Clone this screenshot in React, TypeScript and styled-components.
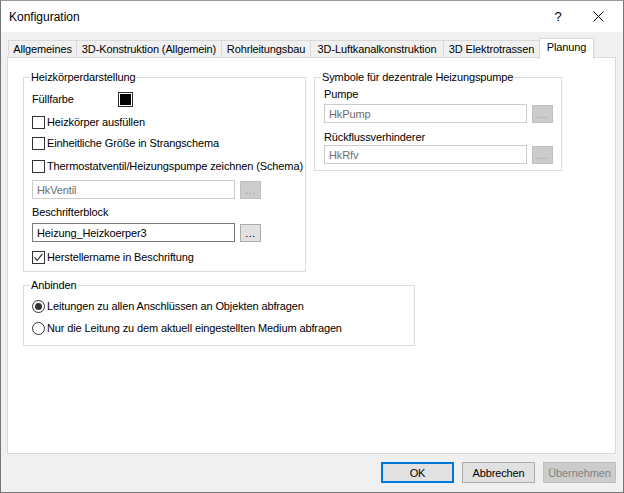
import React from "react";
import styled, { createGlobalStyle } from "styled-components";

const GlobalStyle = createGlobalStyle`
  html, body {
    margin: 0;
    padding: 0;
    background: #ffffff;
  }
  body {
    font-family: "Liberation Sans", Arial, sans-serif;
    font-size: 11px;
    letter-spacing: -0.12px;
    color: #000000;
  }
  * {
    box-sizing: border-box;
  }
`;

const Window = styled.div`
  width: 624px;
  height: 493px;
  display: flex;
  flex-direction: column;
  border: 1px solid #767676;
  border-top-color: #9a9a9a;
  background: #f0f0f0;
  overflow: hidden;
`;

const TitleBar = styled.div`
  height: 31px;
  flex: none;
  display: flex;
  align-items: center;
  background: #ffffff;
  padding: 0 2px 0 8px;
`;

const Title = styled.div`
  flex: 1;
  font-size: 12px;
  letter-spacing: 0;
  padding-top: 1px;
`;

const TitleButton = styled.div<{ $w: number }>`
  width: ${(p) => p.$w}px;
  height: 30px;
  display: flex;
  align-items: center;
  justify-content: center;
  font-size: 13px;
`;

const Body = styled.div`
  flex: 1;
  display: flex;
  flex-direction: column;
  padding: 6px 7px 8px 6px;
`;

const TabStrip = styled.div`
  display: flex;
  align-items: flex-end;
  height: 20px;
  padding-left: 1px;
  position: relative;
  z-index: 1;
`;

const Tab = styled.div<{ $w: number; $active?: boolean }>`
  width: ${(p) => p.$w}px;
  height: ${(p) => (p.$active ? 21 : 18)}px;
  margin-left: -1px;
  margin-bottom: ${(p) => (p.$active ? -1 : 0)}px;
  border: 1px solid #d9d9d9;
  border-bottom: ${(p) => (p.$active ? "none" : "1px solid #d9d9d9")};
  background: ${(p) => (p.$active ? "#ffffff" : "#f0f0f0")};
  display: flex;
  justify-content: center;
  align-items: ${(p) => (p.$active ? "flex-start" : "center")};
  padding-top: ${(p) => (p.$active ? 2 : 0)}px;
  white-space: nowrap;
  &:first-child {
    margin-left: 0;
  }
`;

const Panel = styled.div`
  height: 397px;
  margin-top: -1px;
  background: #ffffff;
  border: 1px solid #d9d9d9;
  padding: 12px 15px 0 15px;
  display: flex;
  flex-direction: column;
`;

const GroupRow = styled.div<{ $mt?: number }>`
  display: flex;
  align-items: flex-start;
  gap: 8px;
  margin-top: ${(p) => p.$mt ?? 0}px;
`;

const Group = styled.fieldset<{ $w: number }>`
  width: ${(p) => p.$w}px;
  margin: 0;
  min-width: 0;
  border: 1px solid #dcdcdc;
  padding: 0;
`;

const Legend = styled.legend`
  margin-left: 6px;
  padding: 0 1px;
  line-height: 14px;
  font-size: 11px;
`;

const GroupBody = styled.div<{ $pl: number; $pb: number }>`
  display: flex;
  flex-direction: column;
  padding: 0 0 ${(p) => p.$pb}px ${(p) => p.$pl}px;
`;

const Row = styled.div<{ $mt: number; $h?: number }>`
  display: flex;
  align-items: center;
  margin-top: ${(p) => p.$mt}px;
  height: ${(p) => p.$h ?? 20}px;
  white-space: nowrap;
`;

const Label = styled.div<{ $w?: number }>`
  width: ${(p) => (p.$w ? `${p.$w}px` : "auto")};
`;

const ColorSwatch = styled.div`
  width: 15px;
  height: 15px;
  border: 1px solid #2b2b2b;
  padding: 1px;
  background: #ffffff;
  &::after {
    content: "";
    display: block;
    width: 100%;
    height: 100%;
    background: #000000;
  }
`;

const Box = styled.div`
  width: 13px;
  height: 13px;
  border: 1px solid #333333;
  background: #ffffff;
  margin-right: 2px;
  flex: none;
  display: flex;
  align-items: center;
  justify-content: center;
`;

const Radio = styled.div<{ $on?: boolean }>`
  width: 13px;
  height: 13px;
  border: 1px solid #333333;
  border-radius: 50%;
  background: #ffffff;
  margin-right: 2px;
  flex: none;
  display: flex;
  align-items: center;
  justify-content: center;
  &::after {
    content: "";
    display: ${(p) => (p.$on ? "block" : "none")};
    width: 7px;
    height: 7px;
    border-radius: 50%;
    background: #333333;
  }
`;

const Input = styled.div<{ $disabled?: boolean }>`
  width: 203px;
  height: 19px;
  border: 1px solid ${(p) => (p.$disabled ? "#cccccc" : "#7a7a7a")};
  background: #ffffff;
  color: ${(p) => (p.$disabled ? "#6d6d6d" : "#000000")};
  padding-left: 4px;
  display: flex;
  align-items: center;
  font-size: 11px;
`;

const Browse = styled.div<{ $disabled?: boolean }>`
  width: 21px;
  height: 18px;
  margin-left: 5px;
  border: 1px solid ${(p) => (p.$disabled ? "#bfbfbf" : "#adadad")};
  background: ${(p) => (p.$disabled ? "#cccccc" : "#e1e1e1")};
  color: ${(p) => (p.$disabled ? "#9a9a9a" : "#000000")};
  display: flex;
  justify-content: center;
  align-items: flex-end;
  padding-bottom: 2px;
  font-size: 11px;
  line-height: 11px;
  letter-spacing: 0.5px;
`;

const Footer = styled.div`
  display: flex;
  justify-content: flex-end;
  gap: 8px;
  margin-top: 8px;
`;

const Button = styled.div<{ $variant?: "default" | "disabled" }>`
  width: 73px;
  height: 21px;
  display: flex;
  align-items: center;
  justify-content: center;
  border: ${(p) =>
    p.$variant === "default"
      ? "2px solid #0078d7"
      : p.$variant === "disabled"
      ? "1px solid #bfbfbf"
      : "1px solid #adadad"};
  background: ${(p) => (p.$variant === "disabled" ? "#cccccc" : "#e1e1e1")};
  color: ${(p) => (p.$variant === "disabled" ? "#838383" : "#000000")};
  font-size: 11px;
`;

const Check = () => (
  <svg width="11" height="11" viewBox="0 0 11 11">
    <path d="M1.5 5.5 L4.2 8.3 L9.5 1.8" fill="none" stroke="#333" strokeWidth="1.2" />
  </svg>
);

const CheckRow: React.FC<{ mt: number; checked?: boolean; children: React.ReactNode }> = ({
  mt,
  checked,
  children,
}) => (
  <Row $mt={mt}>
    <Box>{checked && <Check />}</Box>
    <Label>{children}</Label>
  </Row>
);

const tabs = [
  { name: "Allgemeines", w: 69 },
  { name: "3D-Konstruktion (Allgemein)", w: 146 },
  { name: "Rohrleitungsbau", w: 90 },
  { name: "3D-Luftkanalkonstruktion", w: 134 },
  { name: "3D Elektrotrassen", w: 97 },
];

export default function App() {
  return (
    <>
      <GlobalStyle />
      <Window>
        <TitleBar>
          <Title>Konfiguration</Title>
          <TitleButton $w={34}>?</TitleButton>
          <TitleButton $w={46}>
            <svg width="11" height="11" viewBox="0 0 11 11">
              <path d="M0.5 0.5 L10.5 10.5 M10.5 0.5 L0.5 10.5" stroke="#000" strokeWidth="1" />
            </svg>
          </TitleButton>
        </TitleBar>
        <Body>
          <TabStrip>
            {tabs.map((t) => (
              <Tab key={t.name} $w={t.w}>
                {t.name}
              </Tab>
            ))}
            <Tab $w={55} $active>
              Planung
            </Tab>
          </TabStrip>
          <Panel>
            <GroupRow>
              <Group $w={283}>
                <Legend>Heizkörperdarstellung</Legend>
                <GroupBody $pl={8} $pb={4}>
                  <Row $mt={5}>
                    <Label $w={86}>Füllfarbe</Label>
                    <ColorSwatch />
                  </Row>
                  <CheckRow mt={3}>Heizkörper ausfüllen</CheckRow>
                  <CheckRow mt={1}>Einheitliche Größe in Strangschema</CheckRow>
                  <CheckRow mt={3}>Thermostatventil/Heizungspumpe zeichnen (Schema)</CheckRow>
                  <Row $mt={4} $h={19}>
                    <Input $disabled>HkVentil</Input>
                    <Browse $disabled>...</Browse>
                  </Row>
                  <Row $mt={5} $h={16}>
                    <Label>Beschrifterblock</Label>
                  </Row>
                  <Row $mt={3} $h={19}>
                    <Input>Heizung_Heizkoerper3</Input>
                    <Browse>...</Browse>
                  </Row>
                  <CheckRow mt={5} checked>
                    Herstellername in Beschriftung
                  </CheckRow>
                </GroupBody>
              </Group>
              <Group $w={248}>
                <Legend>Symbole für dezentrale Heizungspumpe</Legend>
                <GroupBody $pl={9} $pb={6}>
                  <Row $mt={2} $h={16}>
                    <Label>Pumpe</Label>
                  </Row>
                  <Row $mt={2} $h={19}>
                    <Input $disabled>HkPump</Input>
                    <Browse $disabled>...</Browse>
                  </Row>
                  <Row $mt={6} $h={16}>
                    <Label>Rückflussverhinderer</Label>
                  </Row>
                  <Row $mt={0} $h={19}>
                    <Input $disabled>HkRfv</Input>
                    <Browse $disabled>...</Browse>
                  </Row>
                </GroupBody>
              </Group>
            </GroupRow>
            <GroupRow $mt={6}>
              <Group $w={392}>
                <Legend>Anbinden</Legend>
                <GroupBody $pl={8} $pb={7}>
                  <Row $mt={4}>
                    <Radio $on />
                    <Label>Leitungen zu allen Anschlüssen an Objekten abfragen</Label>
                  </Row>
                  <Row $mt={2}>
                    <Radio />
                    <Label>Nur die Leitung zu dem aktuell eingestellten Medium abfragen</Label>
                  </Row>
                </GroupBody>
              </Group>
            </GroupRow>
          </Panel>
          <Footer>
            <Button $variant="default">OK</Button>
            <Button>Abbrechen</Button>
            <Button $variant="disabled">Übernehmen</Button>
          </Footer>
        </Body>
      </Window>
    </>
  );
}
